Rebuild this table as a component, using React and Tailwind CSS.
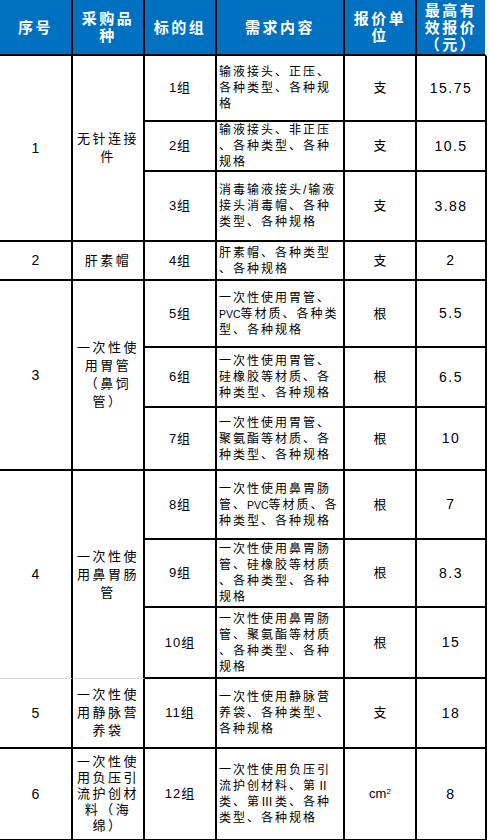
import React from "react";

const groups = [
  {
    no: "1",
    name: ["无针连接", "件"],
    nameLh: "leading-[18px]",
    items: [
      { g: "1组", h: "h-[66px]", desc: ["输液接头、正压、", "各种类型、各种规", "格"], unit: "支", price: "15.75" },
      { g: "2组", h: "h-[48px]", desc: ["输液接头、非正压", "、各种类型、各种", "规格"], unit: "支", price: "10.5" },
      { g: "3组", h: "h-[70px]", desc: ["消毒输液接头/输液", "接头消毒帽、各种", "类型、各种规格"], unit: "支", price: "3.88" },
    ],
  },
  {
    no: "2",
    name: ["肝素帽"],
    nameLh: "leading-[18px]",
    items: [
      { g: "4组", h: "h-[39px]", desc: ["肝素帽、各种类型", "、各种规格"], unit: "支", price: "2" },
    ],
  },
  {
    no: "3",
    name: ["一次性使", "用胃管", "（鼻饲", "管）"],
    nameLh: "leading-[18px]",
    items: [
      { g: "5组", h: "h-[67px]", desc: ["一次性使用胃管、", "PVC等材质、各种类", "型、各种规格"], unit: "根", price: "5.5" },
      { g: "6组", h: "h-[60px]", desc: ["一次性使用胃管、", "硅橡胶等材质、各", "种类型、各种规格"], unit: "根", price: "6.5" },
      { g: "7组", h: "h-[63px]", desc: ["一次性使用胃管、", "聚氨酯等材质、各", "种类型、各种规格"], unit: "根", price: "10" },
    ],
  },
  {
    no: "4",
    name: ["一次性使", "用鼻胃肠", "管"],
    nameLh: "leading-[18px]",
    soft: true,
    items: [
      { g: "8组", h: "h-[69px]", desc: ["一次性使用鼻胃肠", "管、PVC等材质、各", "种类型、各种规格"], unit: "根", price: "7" },
      { g: "9组", h: "h-[68px]", desc: ["一次性使用鼻胃肠", "管、硅橡胶等材质", "、各种类型、各种", "规格"], unit: "根", price: "8.3" },
      { g: "10组", h: "h-[71px]", desc: ["一次性使用鼻胃肠", "管、聚氨酯等材质", "、各种类型、各种", "规格"], unit: "根", price: "15" },
    ],
  },
  {
    no: "5",
    name: ["一次性使", "用静脉营", "养袋"],
    nameLh: "leading-[18px]",
    items: [
      { g: "11组", h: "h-[70px]", desc: ["一次性使用静脉营", "养袋、各种类型、", "各种规格"], unit: "支", price: "18" },
    ],
  },
  {
    no: "6",
    name: ["一次性使", "用负压引", "流护创材", "料（海", "绵）"],
    nameLh: "leading-[16px]",
    items: [
      { g: "12组", h: "h-[92px]", desc: ["一次性使用负压引", "流护创材料、第Ⅱ", "类、第Ⅲ类、各种", "类型、各种规格"], unit: "cm2", price: "8" },
    ],
  },
];

const headers = [
  ["序号"],
  ["采购品", "种"],
  ["标的组"],
  ["需求内容"],
  ["报价单", "位"],
  ["最高有", "效报价", "（元）"],
];

const font = "font-['Liberation_Sans','Noto_Sans_CJK_SC',sans-serif]";

// "PVC" sits narrow in the sheet, so it gets no letter spacing
function DescLine({ text }) {
  const parts = text.split("PVC");
  if (parts.length === 1) return <div className="whitespace-nowrap">{text}</div>;
  return (
    <div className="whitespace-nowrap">
      {parts[0]}
      <span className="text-[10.5px] tracking-normal">PVC</span>
      {parts[1]}
    </div>
  );
}

export default function App() {
  return (
    <div className={`bg-white w-[489px] h-[840px] ${font} text-black [text-spacing-trim:space-all]`}>
      <table className="table-fixed border-separate border-spacing-0 w-[487px]">
        <colgroup>
          <col className="w-[73px]" />
          <col className="w-[72px]" />
          <col className="w-[72px]" />
          <col className="w-[128px]" />
          <col className="w-[72px]" />
          <col className="w-[70px]" />
        </colgroup>
        <thead>
          <tr className="h-[56px]">
            {headers.map((lines, i) => (
              <th
                key={i}
                className={`bg-[#0070c0] text-white font-bold text-[15px] leading-[17px] tracking-[2.5px] text-center align-middle p-0 border-b-2 border-b-black border-r-2 ${
                  i === headers.length - 1 ? "border-r-white" : "border-r-black"
                }`}
              >
                {lines.map((l) => (
                  <div key={l} className="whitespace-nowrap">
                    {l}
                  </div>
                ))}
              </th>
            ))}
          </tr>
        </thead>
        <tbody>
          {groups.map((grp) =>
            grp.items.map((it, idx) => (
              <tr key={it.g} className={it.h}>
                {idx === 0 && (
                  <>
                    <td
                      rowSpan={grp.items.length}
                      className={`p-0 text-center align-middle text-[14px] border-r-2 border-r-black ${
                        grp.soft ? "border-b border-b-[#d9d9d9]" : "border-b-2 border-b-black"
                      }`}
                    >
                      {grp.no}
                    </td>
                    <td
                      rowSpan={grp.items.length}
                      className={`p-0 text-center align-middle text-[13px] tracking-[2.5px] ${grp.nameLh} border-r-2 border-r-black ${
                        grp.soft ? "border-b border-b-[#d9d9d9]" : "border-b-2 border-b-black"
                      }`}
                    >
                      {grp.name.map((l) => (
                        <div key={l} className="whitespace-nowrap">
                          {l}
                        </div>
                      ))}
                    </td>
                  </>
                )}
                <td className="p-0 text-center align-middle text-[13px] tracking-[1px] border-r-2 border-b-2 border-black">
                  {it.g}
                </td>
                <td className="p-0 pl-[2px] text-left align-middle text-[12px] leading-[16px] tracking-[2px] border-r-2 border-b-2 border-black">
                  {it.desc.map((l, k) => (
                    <DescLine key={k} text={l} />
                  ))}
                </td>
                <td className="p-0 text-center align-middle text-[13px] border-r-2 border-b-2 border-black">
                  {it.unit === "cm2" ? (
                    <span>
                      cm<sup className="text-[8px]">2</sup>
                    </span>
                  ) : (
                    it.unit
                  )}
                </td>
                <td className="p-0 text-center align-middle text-[14px] tracking-[1.5px] border-r-2 border-b-2 border-black">
                  {it.price}
                </td>
              </tr>
            ))
          )}
        </tbody>
      </table>
    </div>
  );
}
